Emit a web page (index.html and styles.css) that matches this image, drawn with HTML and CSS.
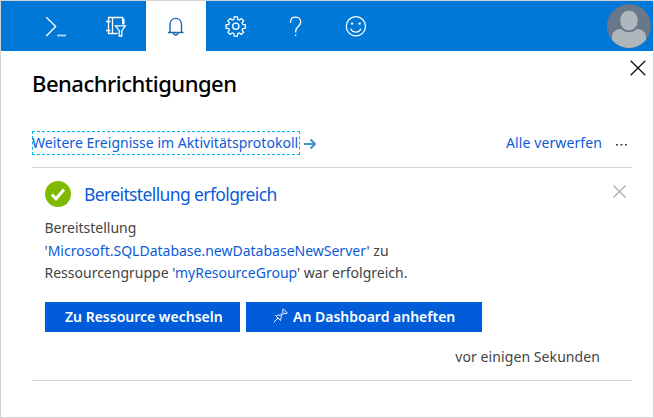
FILE: index.html
```html
<!DOCTYPE html>
<html lang="de">
<head>
<meta charset="utf-8">
<title>Benachrichtigungen</title>
<link rel="stylesheet" href="styles.css">
</head>
<body>
<div class="window">
  <header class="topbar">
    <nav class="tools">
      <a class="tool"><svg width="24" height="24" viewBox="0 0 24 24"><path d="M2.300 3.300 11.700 12.500 2.300 22"/><path d="M13 21.500h9" class="soft"/></svg></a>
      <a class="tool"><svg width="24" height="24" viewBox="0 0 24 24"><path d="M13.500 19.500H4.500V3.500h14.200v7M8.500 3.500v16M18.700 5.500h1.200v5M2 7.500h4.500M2 16.500h4.500"/><path d="M11.500 11.800h9.800l-3.500 4.800v5.400h-2.600v-5.400z"/></svg></a>
      <a class="tool active"><svg width="24" height="24" viewBox="0 0 24 24"><path d="M4 18.500h15.500M6 18.300V10.800C6 7 8.500 4.400 11.800 4.400S17.500 7 17.500 10.800v7.500M9.600 18.800c.2 3 4.200 3 4.400 0"/></svg></a>
      <a class="tool"><svg width="24" height="24" viewBox="0 0 24 24"><path d="M10.200 2.900h3.200l.4 2.600 1.500.6 2.100-1.600 2.200 2.200-1.500 2.100.7 1.600 2.600.4v3.300l-2.600.4-.7 1.600 1.500 2.100-2.200 2.200-2.100-1.500-1.500.6-.4 2.600h-3.200l-.4-2.600-1.600-.6-2.100 1.500-2.200-2.200 1.500-2.100-.6-1.600-2.700-.4v-3.300l2.700-.4.6-1.600-1.500-2.100 2.200-2.200 2.100 1.600 1.600-.6z"/><circle cx="11.800" cy="12.300" r="3.100"/></svg></a>
      <a class="tool"><svg width="24" height="24" viewBox="0 0 24 24"><path d="M6.600 8.700V7.800c0-2.900 2-4.600 4.900-4.600s5.200 1.800 5.200 4.700c0 4.600-5 4.500-5 9.300v1.300M11.700 20.400v1.700"/></svg></a>
      <a class="tool"><svg width="24" height="24" viewBox="0 0 24 24"><circle cx="11.900" cy="12.300" r="9.600"/><path d="M6.700 14.700c2 4.500 8.200 4.500 10.200 0"/><circle class="eye" cx="8" cy="9.600" r="1.200"/><circle class="eye" cx="15.600" cy="9.600" r="1.200"/></svg></a>
    </nav>
    <svg class="avatar" width="44" height="44" viewBox="0 0 44 44">
      <defs><clipPath id="disc"><circle cx="22" cy="22" r="22"/></clipPath></defs>
      <circle cx="22" cy="22" r="22" fill="#68788a"/>
      <g clip-path="url(#disc)" fill="#afb6bc"><path d="M5 44V33c0-5 4-8 9-8 2 2 5 3.300 8 3.300s6-1.300 8-3.300c5 0 9 3 9 8v11z"/><ellipse cx="22" cy="16.500" rx="9.300" ry="10.500" stroke="#68788a" stroke-width="1"/></g>
    </svg>
  </header>

  <main class="panel">
    <div class="title-row">
      <h1><span class="t-title">Benachrichtigungen</span></h1>
      <svg class="close" width="16" height="16" viewBox="0 0 16 16"><path d="M.7.7 15.300 15.300M15.300.7.7 15.300"/></svg>
    </div>
    <div class="actions">
      <a class="log-link"><span>Weitere Ereignisse im Aktivitätsprotokoll</span></a>
      <svg class="arrow" width="12" height="12" viewBox="0 0 12 12"><path d="M0 6h11M6.500 1.500 11 6l-4.500 4.500"/></svg>
      <a class="dismiss"><span class="t-dismiss">Alle verwerfen</span></a>
      <svg class="more" width="11" height="2" viewBox="0 0 11 2"><path d="M0 0h2v1.500H0zM4.500 0h2v1.500h-2zM9 0h2v1.500H9z"/></svg>
    </div>
    <article class="notice">
      <div class="notice-head">
        <svg width="26" height="26" viewBox="0 0 26 26"><circle cx="13" cy="13" r="13" fill="#7fba00"/><path class="check" d="M6.800 13.500 11 17.800 19 8.500"/></svg>
        <h2><span class="t-head">Bereitstellung erfolgreich</span></h2>
        <svg class="remove" width="13" height="13" viewBox="0 0 13 13"><path d="M.5.5l12 12M12.500.5l-12 12"/></svg>
      </div>
      <div class="message">
        <div><span>Bereitstellung</span></div>
        <div><span>'<a>Microsoft.SQLDatabase.newDatabaseNewServer</a>' zu</span></div>
        <div><span>Ressourcengruppe '<a>myResourceGroup</a>' war erfolgreich.</span></div>
      </div>
      <div class="buttons">
        <button class="go"><span>Zu Ressource wechseln</span></button>
        <button class="pin"><svg width="15" height="15" viewBox="0 0 15 15"><path d="M.7 14.300 5 10M2.300 7.300l5.400 5.400M3.300 8.200c1-1.200 2.500-1.300 3.800-.8l3-3.300-.6-2L10.300.9l4 4-1.100.9-2-.6-3.300 3c.5 1.300.3 2.700-.8 3.700"/></svg><span>An Dashboard anheften</span></button>
      </div>
      <div class="time"><span class="t-time">vor einigen Sekunden</span></div>
    </article>
  </main>
</div>
</body>
</html>
```

FILE: styles.css
```css
* { box-sizing: border-box; }
body { margin: 0; background: #fff; font-family: "Noto Sans", "Open Sans", sans-serif; font-size: 14px; color: #444; }
svg { display: block; flex: none; fill: none; }
a { color: #0a5bd9; }
span { white-space: nowrap; }
h1, h2 { margin: 0; font-weight: 400; }
.window { width: 654px; height: 418px; border: 1px solid #d2d2d2; overflow: hidden; }
.topbar { height: 50px; background: #0078d7; display: flex; justify-content: space-between; padding: 0 2px 0 25px; }
.tools { display: flex; }
.tool { width: 60px; height: 50px; display: flex; align-items: center; justify-content: center; }
.tool svg { stroke: #fff; stroke-width: 1.3; }
.tool .soft { stroke: #b5d7f3; stroke-width: 1.8; }
.tool .eye { fill: #fff; stroke: none; }
.tool.active { background: #fff; }
.tool.active svg { stroke: #1867b5; stroke-width: 1.4; }
.avatar { margin-top: 3px; }
.panel { padding: 0 21px 0 31px; }
.title-row { height: 78px; display: flex; justify-content: space-between; margin-right: -14px; }
h1 { padding-top: 16px; font-size: 22px; line-height: 32px; font-weight: 500; color: #000; }
.t-title { letter-spacing: -.5px; }
.close { margin-top: 9px; stroke: #111; stroke-width: 1.3; }
.actions { height: 38px; display: flex; align-items: flex-start; }
.log-link { width: 268px; height: 24px; margin-top: 2px; border: 1px dashed #00b5ed; line-height: 21px; }
.log-link span { margin-left: -1px; letter-spacing: .03px; }
.arrow { margin: 9px 0 0 4px; stroke: #3999c6; stroke-width: 2; }
.dismiss { margin-left: auto; width: 96px; margin-top: 3px; line-height: 21px; }
.t-dismiss { letter-spacing: .1px; }
.more { fill: #444; margin: 15px 5px 0 14px; }
.notice { height: 214px; border: solid #d3d3d3; border-width: 1px 0; padding: 0 6px 0 13px; }
.notice-head { height: 49px; padding-top: 13px; display: flex; align-items: flex-start; }
.check { stroke: #fff; stroke-width: 3; }
h2 { margin-left: 13px; font-size: 17.5px; line-height: 26px; color: #0a5bd9; }
.t-head { letter-spacing: -.62px; }
.remove { margin: 4px 0 0 auto; stroke: #aaa; stroke-width: 1.2; }
.message { display: grid; grid-auto-rows: 22.5px; line-height: 22px; margin-left: -.5px; }
.buttons { display: flex; gap: 6px; margin-top: 17px; }
button { height: 30px; border: 0; padding: 0; background: #015cda; color: #fff; font: 600 14px/30px "Noto Sans", sans-serif; display: flex; }
.go { width: 195px; padding-left: 20px; }
.pin { width: 236px; padding-left: 27px; }
.pin svg { stroke: #fff; margin-top: 6px; stroke-width: 1; }
.pin span { margin-left: 5px; }
.time { width: 555px; margin-top: 14px; line-height: 22px; text-align: right; }
.t-time { letter-spacing: .08px; }
```
